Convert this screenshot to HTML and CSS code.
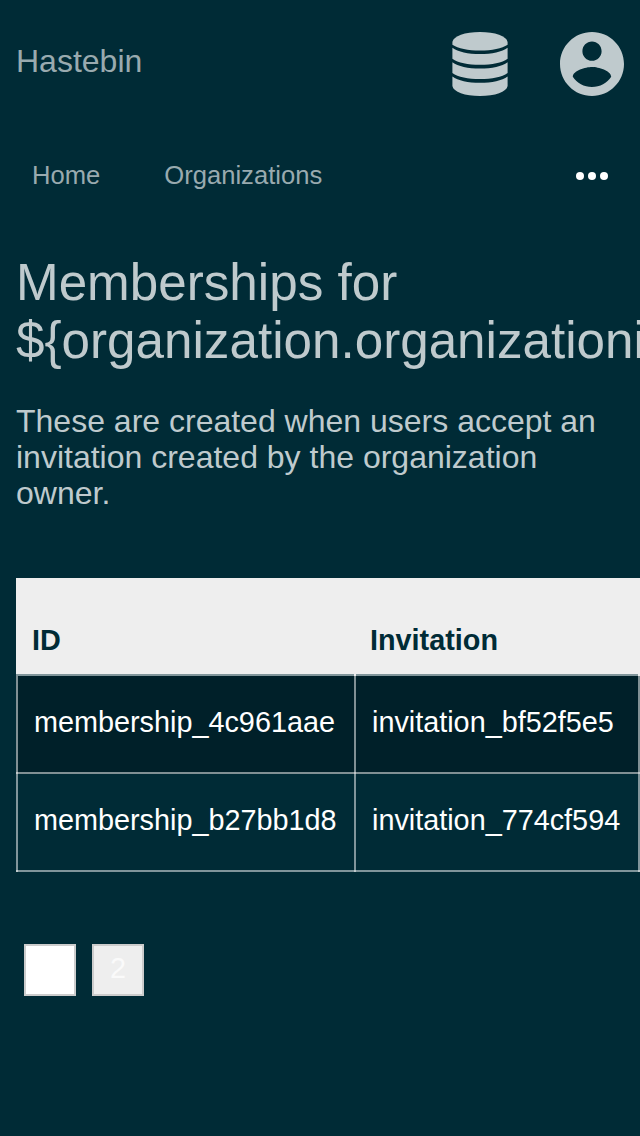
FILE: index.html
```html
<!DOCTYPE html>
<html lang="en">
<head>
<meta charset="utf-8">
<title>Hastebin</title>
<link rel="stylesheet" href="styles.css">
</head>
<body>
<header class="topbar">
  <span class="brand">Hastebin</span>
  <div class="actions">
    <svg class="icon-db" viewBox="0 0 56 64" aria-label="Data">
      <path d="M.4 10C1.4 4 13 0 28 0S54.6 4 55.6 10V12.8C50 16.6 40 18.6 28 18.6S6 16.6 .4 12.8Z"/>
      <path d="M.4 15.8C6 20 16 22.1 28 22.1S50 20 55.6 15.8V26.8C50 30.8 40 32.8 28 32.8S6 30.8 .4 26.8Z"/>
      <path d="M.4 30.2C6 34.4 16 36.5 28 36.5S50 34.4 55.6 30.2V41C50 45 40 47 28 47S6 45 .4 41Z"/>
      <path d="M.4 44.5C6 48.7 16 50.8 28 50.8S50 48.7 55.6 44.5V54C54.6 60 43 64 28 64S1.4 60 .4 54Z"/>
    </svg>
    <svg class="icon-account" viewBox="2 2 20 20" aria-label="Account">
      <path d="M12 2C6.48 2 2 6.48 2 12s4.48 10 10 10 10-4.48 10-10S17.52 2 12 2zm0 3c1.66 0 3 1.34 3 3s-1.34 3-3 3-3-1.34-3-3 1.34-3 3-3zm0 14.2c-2.5 0-4.71-1.28-6-3.22.03-1.99 4-3.08 6-3.08 1.99 0 5.97 1.09 6 3.08-1.29 1.94-3.5 3.22-6 3.22z"/>
    </svg>
  </div>
</header>
<nav class="nav">
  <a class="nav-link">Home</a>
  <a class="nav-link">Organizations</a>
  <svg class="more" viewBox="0 0 32 8" aria-label="More"><circle cx="4" cy="4" r="4"/><circle cx="16" cy="4" r="4"/><circle cx="28" cy="4" r="4"/></svg>
</nav>
<main class="content">
  <h1 class="title">Memberships for ${organization.organizationid}</h1>
  <p class="intro">These are created when users accept an invitation created by the organization owner.</p>
  <div class="table">
    <div class="row head"><div class="cell">ID</div><div class="cell">Invitation</div><div class="cell"></div></div>
    <div class="row odd"><div class="cell">membership_4c961aae</div><div class="cell">invitation_bf52f5e5</div><div class="cell"></div></div>
    <div class="row"><div class="cell">membership_b27bb1d8</div><div class="cell">invitation_774cf594</div><div class="cell"></div></div>
  </div>
  <div class="pages"><a class="page current">1</a><a class="page">2</a></div>
</main>
</body>
</html>
```
FILE: styles.css
```css
* { box-sizing: border-box; }
html { overflow: hidden; }
body {
  margin: 0;
  width: 640px;
  height: 1136px;
  overflow: hidden;
  background: #002b36;
  color: #bfcacd;
  font-family: "Liberation Sans", Arial, sans-serif;
  font-size: 32px;
}
.topbar {
  display: flex;
  justify-content: space-between;
  height: 128px;
  padding: 32px 16px;
}
.brand { line-height: 36px; margin-top: 11px; color: #99aaaf; }
.actions { display: flex; gap: 52px; }
.actions svg { height: 64px; fill: #bfcacd; }
.icon-db { width: 56px; }
.icon-account { width: 64px; }
.nav {
  display: flex;
  align-items: center;
  gap: 64px;
  height: 96px;
  padding: 0 32px;
  font-size: 25.6px;
  color: #99aaaf;
}
.nav-link { padding-bottom: 2px; }
.more { width: 32px; height: 8px; margin-left: auto; fill: #fff; }
.content { padding: 30px 16px 0; }
.title { margin: 0; font-size: 51.2px; font-weight: 400; line-height: 58px; }
.intro { margin: 33px 0 0; line-height: 36px; }
.table {
  width: 960px;
  margin-top: 67px;
  font-size: 28.8px;
  line-height: 32px;
  color: #fff;
}
.row { display: grid; grid-template-columns: 338px 284px 338px; height: 98px; }
.cell {
  padding: 30px 16px 0 18px;
  white-space: nowrap;
  background:
    linear-gradient(rgba(255,255,255,.5), rgba(255,255,255,.5)) 0 0 / 2px 100% no-repeat,
    linear-gradient(rgba(255,255,255,.5), rgba(255,255,255,.5)) 0 100% / 100% 2px no-repeat;
}
.odd { background: #002029; }
.head {
  background: #eee;
  color: #002b36;
  font-weight: 700;
}
.head .cell {
  padding: 46px 16px 0;
  background: linear-gradient(#80959a, #80959a) 2px 100% / 100% 2px no-repeat;
}
.head .cell:first-child { background-position: 0 100%; }
.pages { display: flex; gap: 16px; margin: 72px 8px 0; }
.page {
  width: 52px;
  height: 52px;
  border: 2px solid #ccc;
  background: #eee;
  color: #fafafa;
  font-size: 28.8px;
  line-height: 44px;
  text-align: center;
}
.current { background: #fff; color: #fff; }
```
